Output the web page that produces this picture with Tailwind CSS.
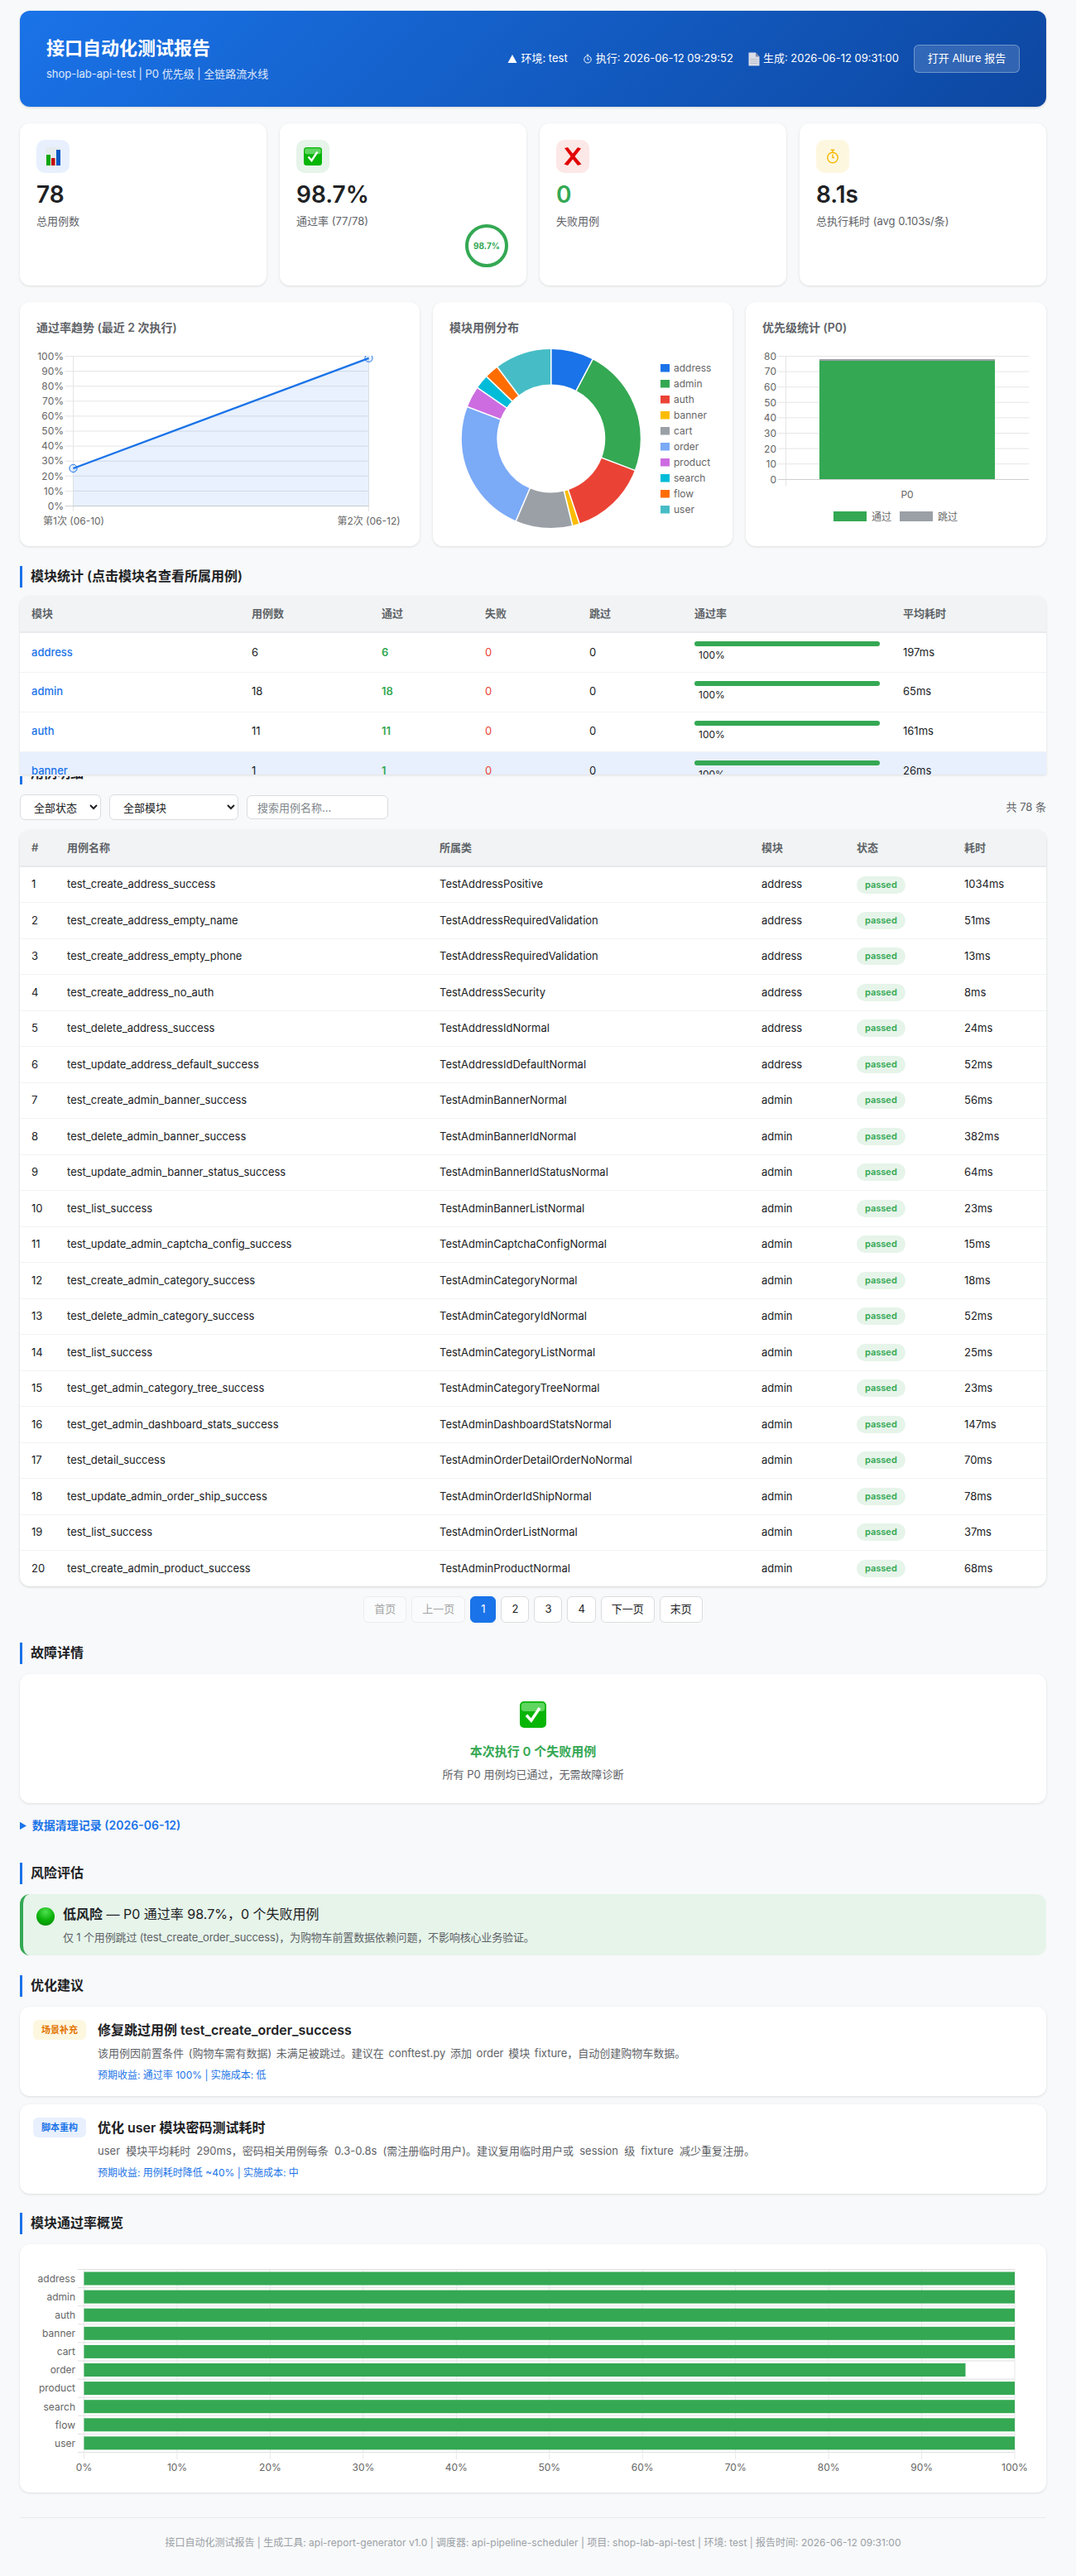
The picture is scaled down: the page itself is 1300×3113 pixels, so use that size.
<!DOCTYPE html>
<html lang="zh-CN">
<head>
<meta charset="utf-8">
<title>接口自动化测试报告</title>
<script src="https://cdn.jsdelivr.net/npm/@tailwindcss/browser@4"></script>
</head>
<body class="bg-[#f8f9fa] text-[#202124] font-[Inter,'Noto_Sans_CJK_SC',sans-serif] text-[13px]">
<div class="pl-6 pr-9 pt-[13px] pb-[29px]">

<!-- header -->
<header class="h-[116px] rounded-xl bg-[linear-gradient(135deg,#1a73e8,#0d47a1)] px-8 flex items-center justify-between text-white shadow-[0_1px_3px_rgba(60,64,67,0.2)]">
  <div>
    <h1 class="text-[22px] leading-[30px] font-bold mt-[-1px]">接口自动化测试报告</h1>
    <p class="text-[13px] leading-[20px] mt-[6px] text-white/85">shop-lab-api-test | P0 优先级 | 全链路流水线</p>
  </div>
  <div class="flex items-center gap-[18px] text-[13px]">
    <span class="flex items-center gap-[4px]"><svg width="12" height="12" viewBox="0 0 12 12"><path d="M6 1 L11.5 11 H0.5 Z" fill="#fff"/></svg>环境: test</span>
    <span class="flex items-center gap-[4px]"><svg width="12" height="12" viewBox="0 0 12 12" fill="none" stroke="#fff" stroke-width="1"><circle cx="6" cy="6.8" r="4.2"/><path d="M6 4.4V7L7.6 7M4.8 1.2H7.2"/></svg>执行: 2026-06-12 09:29:52</span>
    <span class="flex items-center gap-[4px]"><svg width="14" height="17" viewBox="0 0 14 17"><path d="M0.5 0.5H9L13.5 5.5V16.5H0.5Z" fill="#d9dce6"/><path d="M9 0.5V5.5H13.5Z" fill="#7f8aa8"/><path d="M2.5 8.5H11.5M2.5 11H11.5M2.5 13.5H11.5" stroke="#b8bdcc" stroke-width="1"/></svg>生成: 2026-06-12 09:31:00</span>
    <a class="ml-0 h-[34px] w-[128px] justify-center flex items-center rounded-md border border-white/30 bg-white/15 text-white">打开 Allure 报告</a>
  </div>
</header>

<!-- stat cards -->
<section class="mt-5 grid grid-cols-4 gap-4">
  <div class="bg-white rounded-xl p-5 shadow-[0_1px_3px_rgba(60,64,67,0.15)] flex flex-col">
    <div class="w-10 h-10 rounded-[10px] bg-[#e8f0fe] flex items-center justify-center">
      <svg width="18" height="22" viewBox="0 0 18 22"><path d="M0 0H18V22H0Z" fill="#e6ebee"/><path d="M1 9H6V22H1Z" fill="#0aa80a"/><path d="M7 13H11.5V22H7Z" fill="#c40c0c"/><path d="M13 3H18V22H13Z" fill="#0a58c4"/></svg>
    </div>
    <div class="mt-[9px] text-[28px] leading-[34px] font-semibold">78</div>
    <div class="mt-[5px] leading-[20px] text-[#5f6368]">总用例数</div>
  </div>
  <div class="bg-white rounded-xl p-5 shadow-[0_1px_3px_rgba(60,64,67,0.15)] flex flex-col">
    <div class="w-10 h-10 rounded-[10px] bg-[#e6f4ea] flex items-center justify-center">
      <svg width="22" height="22" viewBox="0 0 22 22"><rect width="22" height="22" rx="3.5" fill="#07b507"/><rect x="1.2" y="1.2" width="19.6" height="7" rx="2.5" fill="#5fd65f"/><path d="M5.5 11.5 L9.5 16 L16.5 5.5" fill="none" stroke="#fff" stroke-width="2.4"/></svg>
    </div>
    <div class="mt-[9px] text-[28px] leading-[34px] font-semibold">98.7%</div>
    <div class="mt-[5px] leading-[20px] text-[#5f6368]">通过率 (77/78)</div>
    <svg class="-mt-[8px] self-end" width="56" height="56" viewBox="0 0 56 56"><circle cx="28" cy="28" r="24" fill="none" stroke="#34a853" stroke-width="4"/><text x="28" y="31.5" text-anchor="middle" font-size="10" font-weight="700" fill="#34a853">98.7%</text></svg>
  </div>
  <div class="bg-white rounded-xl p-5 shadow-[0_1px_3px_rgba(60,64,67,0.15)] flex flex-col">
    <div class="w-10 h-10 rounded-[10px] bg-[#fce8e6] flex items-center justify-center">
      <svg width="24" height="22" viewBox="0 0 24 22"><path d="M2 1 L6 0 L12 7.5 L18 0 L22 1.5 L14.5 11 L22.5 20.5 L18 22 L12 14.5 L6 22 L1.5 20.5 L9.5 11 Z" fill="#e20606"/></svg>
    </div>
    <div class="mt-[9px] text-[28px] leading-[34px] font-semibold text-[#34a853]">0</div>
    <div class="mt-[5px] leading-[20px] text-[#5f6368]">失败用例</div>
  </div>
  <div class="bg-white rounded-xl p-5 shadow-[0_1px_3px_rgba(60,64,67,0.15)] flex flex-col">
    <div class="w-10 h-10 rounded-[10px] bg-[#fef7e0] flex items-center justify-center">
      <svg width="16" height="18" viewBox="0 0 16 18" fill="none" stroke="#f5b800" stroke-width="1.4"><circle cx="8" cy="10.5" r="6.2"/><path d="M8 6.5V10.5L10 10.5M5.8 1.2H10.2M8 1.2V4"/></svg>
    </div>
    <div class="mt-[9px] text-[28px] leading-[34px] font-semibold">8.1s</div>
    <div class="mt-[5px] leading-[20px] text-[#5f6368]">总执行耗时 (avg 0.103s/条)</div>
  </div>
</section>

<!-- charts -->
<section class="mt-5 grid grid-cols-[4fr_3fr_3fr] gap-4 h-[295px]">
  <div class="bg-white rounded-xl p-5 shadow-[0_1px_3px_rgba(60,64,67,0.15)]">
    <h3 class="text-[14px] leading-[21px] font-semibold text-[#5f6368] mb-[13px]">通过率趋势 (最近 2 次执行)</h3>
    <svg class="block overflow-visible" width="443" height="221" viewBox="0 0 443 221">
      <defs><clipPath id="lineclip"><rect x="70" y="430" width="390" height="200"/></clipPath></defs>
      <g transform="translate(-44,-419)" font-size="12" fill="#666">
        <path d="M78.5 430.5H445.5M78.5 448.6H445.5M78.5 466.7H445.5M78.5 484.8H445.5M78.5 502.9H445.5M78.5 521H445.5M78.5 539.1H445.5M78.5 557.2H445.5M78.5 575.3H445.5M78.5 593.4H445.5M88.5 430.5V618M445.5 430.5V618" stroke="#e5e5e5" fill="none"/>
        <path d="M78.5 611.5H445.5" stroke="#cfcfcf" fill="none"/>
        <path d="M88.5 566 L445.5 432.8 V611.5 H88.5 Z" fill="#1a73e8" fill-opacity="0.1"/>
        <g clip-path="url(#lineclip)">
          <circle cx="88.5" cy="566" r="4.6" fill="#1a73e8" fill-opacity="0.1" stroke="#1a73e8" stroke-width="1"/>
          <circle cx="445.5" cy="432.8" r="4.6" fill="#1a73e8" fill-opacity="0.1" stroke="#1a73e8" stroke-width="1"/>
          <path d="M88.5 566 L445.5 432.8" stroke="#1a73e8" stroke-width="2.4" fill="none"/>
        </g>
        <g text-anchor="end">
          <text x="77" y="435">100%</text><text x="77" y="453">90%</text><text x="77" y="471">80%</text><text x="77" y="489">70%</text><text x="77" y="507">60%</text><text x="77" y="525">50%</text><text x="77" y="543">40%</text><text x="77" y="561">30%</text><text x="77" y="580">20%</text><text x="77" y="598">10%</text><text x="77" y="616">0%</text>
        </g>
        <g text-anchor="middle">
          <text x="89" y="634">第1次 (06-10)</text><text x="445.5" y="634">第2次 (06-12)</text>
        </g>
      </g>
    </svg>
  </div>
  <div class="bg-white rounded-xl p-5 shadow-[0_1px_3px_rgba(60,64,67,0.15)]">
    <h3 class="text-[14px] leading-[21px] font-semibold text-[#5f6368] mb-[13px]">模块用例分布</h3>
    <svg class="block overflow-visible" width="322" height="221" viewBox="0 0 322 221">
      <g transform="translate(-543,-419)" font-size="12" fill="#666">
        <g transform="translate(665.8,530) rotate(-90)" fill="none" stroke-width="42.5">
          <circle r="86.75" pathLength="78" stroke="#1a73e8" stroke-dasharray="6 72" stroke-dashoffset="0"/>
          <circle r="86.75" pathLength="78" stroke="#34a853" stroke-dasharray="18 60" stroke-dashoffset="-6"/>
          <circle r="86.75" pathLength="78" stroke="#ea4335" stroke-dasharray="11 67" stroke-dashoffset="-24"/>
          <circle r="86.75" pathLength="78" stroke="#fbbc04" stroke-dasharray="1 77" stroke-dashoffset="-35"/>
          <circle r="86.75" pathLength="78" stroke="#9aa0a6" stroke-dasharray="8 70" stroke-dashoffset="-36"/>
          <circle r="86.75" pathLength="78" stroke="#7baaf7" stroke-dasharray="19 59" stroke-dashoffset="-44"/>
          <circle r="86.75" pathLength="78" stroke="#cc6ce0" stroke-dasharray="3 75" stroke-dashoffset="-63"/>
          <circle r="86.75" pathLength="78" stroke="#00bcd8" stroke-dasharray="2 76" stroke-dashoffset="-66"/>
          <circle r="86.75" pathLength="78" stroke="#ff6d00" stroke-dasharray="2 76" stroke-dashoffset="-68"/>
          <circle r="86.75" pathLength="78" stroke="#46bdc6" stroke-dasharray="8 70" stroke-dashoffset="-70"/>
        </g>
        <g transform="translate(665.8,530)" stroke="#fff" stroke-width="1.6">
          <line x1="0" y1="-60" x2="0" y2="-112"/>
          <line x1="0" y1="-60" x2="0" y2="-112" transform="rotate(27.69)"/>
          <line x1="0" y1="-60" x2="0" y2="-112" transform="rotate(110.77)"/>
          <line x1="0" y1="-60" x2="0" y2="-112" transform="rotate(161.54)"/>
          <line x1="0" y1="-60" x2="0" y2="-112" transform="rotate(166.15)"/>
          <line x1="0" y1="-60" x2="0" y2="-112" transform="rotate(203.08)"/>
          <line x1="0" y1="-60" x2="0" y2="-112" transform="rotate(290.77)"/>
          <line x1="0" y1="-60" x2="0" y2="-112" transform="rotate(304.62)"/>
          <line x1="0" y1="-60" x2="0" y2="-112" transform="rotate(313.85)"/>
          <line x1="0" y1="-60" x2="0" y2="-112" transform="rotate(323.08)"/>
        </g>
        <rect x="798" y="440" width="11" height="9.5" fill="#1a73e8"/><text x="814" y="448.5">address</text>
        <rect x="798" y="459" width="11" height="9.5" fill="#34a853"/><text x="814" y="467.5">admin</text>
        <rect x="798" y="478" width="11" height="9.5" fill="#ea4335"/><text x="814" y="486.5">auth</text>
        <rect x="798" y="497" width="11" height="9.5" fill="#fbbc04"/><text x="814" y="505.5">banner</text>
        <rect x="798" y="516" width="11" height="9.5" fill="#9aa0a6"/><text x="814" y="524.5">cart</text>
        <rect x="798" y="535" width="11" height="9.5" fill="#7baaf7"/><text x="814" y="543.5">order</text>
        <rect x="798" y="554" width="11" height="9.5" fill="#cc6ce0"/><text x="814" y="562.5">product</text>
        <rect x="798" y="573" width="11" height="9.5" fill="#00bcd8"/><text x="814" y="581.5">search</text>
        <rect x="798" y="592" width="11" height="9.5" fill="#ff6d00"/><text x="814" y="600.5">flow</text>
        <rect x="798" y="611" width="11" height="9.5" fill="#46bdc6"/><text x="814" y="619.5">user</text>
      </g>
    </svg>
  </div>
  <div class="bg-white rounded-xl p-5 shadow-[0_1px_3px_rgba(60,64,67,0.15)]">
    <h3 class="text-[14px] leading-[21px] font-semibold text-[#5f6368] mb-[13px]">优先级统计 (P0)</h3>
    <svg class="block overflow-visible" width="323" height="221" viewBox="0 0 323 221">
      <g transform="translate(-921,-419)" font-size="12" fill="#666">
        <path d="M940 430.5H1243M940 449.1H1243M940 467.7H1243M940 486.3H1243M940 504.9H1243M940 523.5H1243M940 542.1H1243M940 560.7H1243M949.5 430.5V587" stroke="#e5e5e5" fill="none"/>
        <path d="M940 579.5H1243" stroke="#cfcfcf" fill="none"/>
        <rect x="990" y="434" width="212" height="2" fill="#9aa0a6"/>
        <rect x="990" y="436" width="212" height="143" fill="#34a853"/>
        <g text-anchor="end">
          <text x="938" y="434.5">80</text><text x="938" y="453">70</text><text x="938" y="472">60</text><text x="938" y="491">50</text><text x="938" y="509">40</text><text x="938" y="528">30</text><text x="938" y="547">20</text><text x="938" y="565">10</text><text x="938" y="584">0</text>
        </g>
        <text x="1096" y="602" text-anchor="middle">P0</text>
        <rect x="1007" y="618" width="40" height="12" fill="#34a853"/><text x="1053" y="628.5">通过</text>
        <rect x="1087" y="618" width="40" height="12" fill="#9aa0a6"/><text x="1133" y="628.5">跳过</text>
      </g>
    </svg>
  </div>
</section>

<!-- module table -->
<h2 class="mt-6 mb-[10px] h-[26px] border-l-[3px] border-[#1a73e8] pl-[10px] text-[16px] leading-[24px] font-semibold">模块统计 (点击模块名查看所属用例)</h2>
<div class="relative z-10 h-[218px] bg-[#f8f9fa]">
  <div class="h-[216px] overflow-hidden rounded-t-xl bg-white shadow-[0_1px_3px_rgba(60,64,67,0.15)]">
    <table class="w-full table-fixed border-collapse text-left text-[13px]">
      <thead>
        <tr class="h-[44px] bg-[#f1f3f4] border-b-2 border-[#e8eaed] text-[#5f6368]">
          <th class="w-[266px] pl-[14px] font-semibold">模块</th>
          <th class="w-[157px] pl-[14px] font-semibold">用例数</th>
          <th class="w-[125px] pl-[14px] font-semibold">通过</th>
          <th class="w-[126px] pl-[14px] font-semibold">失败</th>
          <th class="w-[127px] pl-[14px] font-semibold">跳过</th>
          <th class="w-[252px] pl-[14px] font-semibold">通过率</th>
          <th class="pl-[14px] font-semibold">平均耗时</th>
        </tr>
      </thead>
      <tbody>
        <tr class="h-[48px] border-b border-[#f1f3f4]">
          <td class="pl-[14px] text-[#1a73e8] font-medium">address</td><td class="pl-[14px]">6</td><td class="pl-[14px] text-[#34a853] font-semibold">6</td><td class="pl-[14px] text-[#ea4335]">0</td><td class="pl-[14px]">0</td>
          <td class="pl-[14px] pr-[14px]"><div class="h-[6px] rounded-full bg-[#34a853]"></div><div class="pl-[5px] text-[12px] leading-[21px]">100%</div></td><td class="pl-[14px]">197ms</td>
        </tr>
        <tr class="h-[48px] border-b border-[#f1f3f4]">
          <td class="pl-[14px] text-[#1a73e8] font-medium">admin</td><td class="pl-[14px]">18</td><td class="pl-[14px] text-[#34a853] font-semibold">18</td><td class="pl-[14px] text-[#ea4335]">0</td><td class="pl-[14px]">0</td>
          <td class="pl-[14px] pr-[14px]"><div class="h-[6px] rounded-full bg-[#34a853]"></div><div class="pl-[5px] text-[12px] leading-[21px]">100%</div></td><td class="pl-[14px]">65ms</td>
        </tr>
        <tr class="h-[48px] border-b border-[#f1f3f4]">
          <td class="pl-[14px] text-[#1a73e8] font-medium">auth</td><td class="pl-[14px]">11</td><td class="pl-[14px] text-[#34a853] font-semibold">11</td><td class="pl-[14px] text-[#ea4335]">0</td><td class="pl-[14px]">0</td>
          <td class="pl-[14px] pr-[14px]"><div class="h-[6px] rounded-full bg-[#34a853]"></div><div class="pl-[5px] text-[12px] leading-[21px]">100%</div></td><td class="pl-[14px]">161ms</td>
        </tr>
        <tr class="h-[48px] border-b border-[#f1f3f4] bg-[#e8f0fe]">
          <td class="pl-[14px] text-[#1a73e8] font-medium">banner</td><td class="pl-[14px]">1</td><td class="pl-[14px] text-[#34a853] font-semibold">1</td><td class="pl-[14px] text-[#ea4335]">0</td><td class="pl-[14px]">0</td>
          <td class="pl-[14px] pr-[14px]"><div class="h-[6px] rounded-full bg-[#34a853]"></div><div class="pl-[5px] text-[12px] leading-[21px]">100%</div></td><td class="pl-[14px]">26ms</td>
        </tr>
      </tbody>
    </table>
  </div>
</div>

<!-- case list -->
<h2 class="-mt-[16px] mb-3 h-[26px] border-l-[3px] border-[#1a73e8] pl-[10px] text-[16px] leading-[24px] font-semibold">用例明细</h2>
<div class="flex items-center gap-[10px] h-[31px]">
  <select class="w-[98px] h-[31px] px-3 rounded-md border border-[#dadce0] bg-white text-[13px]"><option>全部状态</option></select>
  <select class="w-[156px] h-[31px] px-3 rounded-md border border-[#dadce0] bg-white text-[13px]"><option>全部模块</option></select>
  <input class="w-[171px] h-[29px] px-3 rounded-md border border-[#dadce0] bg-white text-[13px] placeholder:text-[#80868b]" placeholder="搜索用例名称...">
  <span class="ml-auto text-[#5f6368]">共 78 条</span>
</div>
<div class="mt-3 overflow-hidden rounded-xl bg-white shadow-[0_1px_3px_rgba(60,64,67,0.2)]">
  <table class="w-full table-fixed border-collapse text-left text-[13px]">
    <thead>
      <tr class="h-[44px] bg-[#f1f3f4] border-b-2 border-[#e8eaed] text-[#5f6368]">
        <th class="w-[43px] pl-[14px] font-semibold">#</th>
        <th class="w-[450px] pl-[14px] font-semibold">用例名称</th>
        <th class="w-[389px] pl-[14px] font-semibold">所属类</th>
        <th class="w-[115px] pl-[14px] font-semibold">模块</th>
        <th class="w-[130px] pl-[14px] font-semibold">状态</th>
        <th class="pl-[14px] font-semibold">耗时</th>
      </tr>
    </thead>
    <tbody>
      <tr class="h-[43.5px] border-b border-[#f1f3f4]"><td class="pl-[14px]">1</td><td class="pl-[14px]">test_create_address_success</td><td class="pl-[14px]">TestAddressPositive</td><td class="pl-[14px]">address</td><td class="pl-[14px]"><span class="inline-block h-[21px] leading-[21px] px-[10px] rounded-full bg-[#e6f4ea] text-[#34a853] text-[11px] font-semibold">passed</span></td><td class="pl-[14px]">1034ms</td></tr>
      <tr class="h-[43.5px] border-b border-[#f1f3f4]"><td class="pl-[14px]">2</td><td class="pl-[14px]">test_create_address_empty_name</td><td class="pl-[14px]">TestAddressRequiredValidation</td><td class="pl-[14px]">address</td><td class="pl-[14px]"><span class="inline-block h-[21px] leading-[21px] px-[10px] rounded-full bg-[#e6f4ea] text-[#34a853] text-[11px] font-semibold">passed</span></td><td class="pl-[14px]">51ms</td></tr>
      <tr class="h-[43.5px] border-b border-[#f1f3f4]"><td class="pl-[14px]">3</td><td class="pl-[14px]">test_create_address_empty_phone</td><td class="pl-[14px]">TestAddressRequiredValidation</td><td class="pl-[14px]">address</td><td class="pl-[14px]"><span class="inline-block h-[21px] leading-[21px] px-[10px] rounded-full bg-[#e6f4ea] text-[#34a853] text-[11px] font-semibold">passed</span></td><td class="pl-[14px]">13ms</td></tr>
      <tr class="h-[43.5px] border-b border-[#f1f3f4]"><td class="pl-[14px]">4</td><td class="pl-[14px]">test_create_address_no_auth</td><td class="pl-[14px]">TestAddressSecurity</td><td class="pl-[14px]">address</td><td class="pl-[14px]"><span class="inline-block h-[21px] leading-[21px] px-[10px] rounded-full bg-[#e6f4ea] text-[#34a853] text-[11px] font-semibold">passed</span></td><td class="pl-[14px]">8ms</td></tr>
      <tr class="h-[43.5px] border-b border-[#f1f3f4]"><td class="pl-[14px]">5</td><td class="pl-[14px]">test_delete_address_success</td><td class="pl-[14px]">TestAddressIdNormal</td><td class="pl-[14px]">address</td><td class="pl-[14px]"><span class="inline-block h-[21px] leading-[21px] px-[10px] rounded-full bg-[#e6f4ea] text-[#34a853] text-[11px] font-semibold">passed</span></td><td class="pl-[14px]">24ms</td></tr>
      <tr class="h-[43.5px] border-b border-[#f1f3f4]"><td class="pl-[14px]">6</td><td class="pl-[14px]">test_update_address_default_success</td><td class="pl-[14px]">TestAddressIdDefaultNormal</td><td class="pl-[14px]">address</td><td class="pl-[14px]"><span class="inline-block h-[21px] leading-[21px] px-[10px] rounded-full bg-[#e6f4ea] text-[#34a853] text-[11px] font-semibold">passed</span></td><td class="pl-[14px]">52ms</td></tr>
      <tr class="h-[43.5px] border-b border-[#f1f3f4]"><td class="pl-[14px]">7</td><td class="pl-[14px]">test_create_admin_banner_success</td><td class="pl-[14px]">TestAdminBannerNormal</td><td class="pl-[14px]">admin</td><td class="pl-[14px]"><span class="inline-block h-[21px] leading-[21px] px-[10px] rounded-full bg-[#e6f4ea] text-[#34a853] text-[11px] font-semibold">passed</span></td><td class="pl-[14px]">56ms</td></tr>
      <tr class="h-[43.5px] border-b border-[#f1f3f4]"><td class="pl-[14px]">8</td><td class="pl-[14px]">test_delete_admin_banner_success</td><td class="pl-[14px]">TestAdminBannerIdNormal</td><td class="pl-[14px]">admin</td><td class="pl-[14px]"><span class="inline-block h-[21px] leading-[21px] px-[10px] rounded-full bg-[#e6f4ea] text-[#34a853] text-[11px] font-semibold">passed</span></td><td class="pl-[14px]">382ms</td></tr>
      <tr class="h-[43.5px] border-b border-[#f1f3f4]"><td class="pl-[14px]">9</td><td class="pl-[14px]">test_update_admin_banner_status_success</td><td class="pl-[14px]">TestAdminBannerIdStatusNormal</td><td class="pl-[14px]">admin</td><td class="pl-[14px]"><span class="inline-block h-[21px] leading-[21px] px-[10px] rounded-full bg-[#e6f4ea] text-[#34a853] text-[11px] font-semibold">passed</span></td><td class="pl-[14px]">64ms</td></tr>
      <tr class="h-[43.5px] border-b border-[#f1f3f4]"><td class="pl-[14px]">10</td><td class="pl-[14px]">test_list_success</td><td class="pl-[14px]">TestAdminBannerListNormal</td><td class="pl-[14px]">admin</td><td class="pl-[14px]"><span class="inline-block h-[21px] leading-[21px] px-[10px] rounded-full bg-[#e6f4ea] text-[#34a853] text-[11px] font-semibold">passed</span></td><td class="pl-[14px]">23ms</td></tr>
      <tr class="h-[43.5px] border-b border-[#f1f3f4]"><td class="pl-[14px]">11</td><td class="pl-[14px]">test_update_admin_captcha_config_success</td><td class="pl-[14px]">TestAdminCaptchaConfigNormal</td><td class="pl-[14px]">admin</td><td class="pl-[14px]"><span class="inline-block h-[21px] leading-[21px] px-[10px] rounded-full bg-[#e6f4ea] text-[#34a853] text-[11px] font-semibold">passed</span></td><td class="pl-[14px]">15ms</td></tr>
      <tr class="h-[43.5px] border-b border-[#f1f3f4]"><td class="pl-[14px]">12</td><td class="pl-[14px]">test_create_admin_category_success</td><td class="pl-[14px]">TestAdminCategoryNormal</td><td class="pl-[14px]">admin</td><td class="pl-[14px]"><span class="inline-block h-[21px] leading-[21px] px-[10px] rounded-full bg-[#e6f4ea] text-[#34a853] text-[11px] font-semibold">passed</span></td><td class="pl-[14px]">18ms</td></tr>
      <tr class="h-[43.5px] border-b border-[#f1f3f4]"><td class="pl-[14px]">13</td><td class="pl-[14px]">test_delete_admin_category_success</td><td class="pl-[14px]">TestAdminCategoryIdNormal</td><td class="pl-[14px]">admin</td><td class="pl-[14px]"><span class="inline-block h-[21px] leading-[21px] px-[10px] rounded-full bg-[#e6f4ea] text-[#34a853] text-[11px] font-semibold">passed</span></td><td class="pl-[14px]">52ms</td></tr>
      <tr class="h-[43.5px] border-b border-[#f1f3f4]"><td class="pl-[14px]">14</td><td class="pl-[14px]">test_list_success</td><td class="pl-[14px]">TestAdminCategoryListNormal</td><td class="pl-[14px]">admin</td><td class="pl-[14px]"><span class="inline-block h-[21px] leading-[21px] px-[10px] rounded-full bg-[#e6f4ea] text-[#34a853] text-[11px] font-semibold">passed</span></td><td class="pl-[14px]">25ms</td></tr>
      <tr class="h-[43.5px] border-b border-[#f1f3f4]"><td class="pl-[14px]">15</td><td class="pl-[14px]">test_get_admin_category_tree_success</td><td class="pl-[14px]">TestAdminCategoryTreeNormal</td><td class="pl-[14px]">admin</td><td class="pl-[14px]"><span class="inline-block h-[21px] leading-[21px] px-[10px] rounded-full bg-[#e6f4ea] text-[#34a853] text-[11px] font-semibold">passed</span></td><td class="pl-[14px]">23ms</td></tr>
      <tr class="h-[43.5px] border-b border-[#f1f3f4]"><td class="pl-[14px]">16</td><td class="pl-[14px]">test_get_admin_dashboard_stats_success</td><td class="pl-[14px]">TestAdminDashboardStatsNormal</td><td class="pl-[14px]">admin</td><td class="pl-[14px]"><span class="inline-block h-[21px] leading-[21px] px-[10px] rounded-full bg-[#e6f4ea] text-[#34a853] text-[11px] font-semibold">passed</span></td><td class="pl-[14px]">147ms</td></tr>
      <tr class="h-[43.5px] border-b border-[#f1f3f4]"><td class="pl-[14px]">17</td><td class="pl-[14px]">test_detail_success</td><td class="pl-[14px]">TestAdminOrderDetailOrderNoNormal</td><td class="pl-[14px]">admin</td><td class="pl-[14px]"><span class="inline-block h-[21px] leading-[21px] px-[10px] rounded-full bg-[#e6f4ea] text-[#34a853] text-[11px] font-semibold">passed</span></td><td class="pl-[14px]">70ms</td></tr>
      <tr class="h-[43.5px] border-b border-[#f1f3f4]"><td class="pl-[14px]">18</td><td class="pl-[14px]">test_update_admin_order_ship_success</td><td class="pl-[14px]">TestAdminOrderIdShipNormal</td><td class="pl-[14px]">admin</td><td class="pl-[14px]"><span class="inline-block h-[21px] leading-[21px] px-[10px] rounded-full bg-[#e6f4ea] text-[#34a853] text-[11px] font-semibold">passed</span></td><td class="pl-[14px]">78ms</td></tr>
      <tr class="h-[43.5px] border-b border-[#f1f3f4]"><td class="pl-[14px]">19</td><td class="pl-[14px]">test_list_success</td><td class="pl-[14px]">TestAdminOrderListNormal</td><td class="pl-[14px]">admin</td><td class="pl-[14px]"><span class="inline-block h-[21px] leading-[21px] px-[10px] rounded-full bg-[#e6f4ea] text-[#34a853] text-[11px] font-semibold">passed</span></td><td class="pl-[14px]">37ms</td></tr>
      <tr class="h-[43.5px]"><td class="pl-[14px]">20</td><td class="pl-[14px]">test_create_admin_product_success</td><td class="pl-[14px]">TestAdminProductNormal</td><td class="pl-[14px]">admin</td><td class="pl-[14px]"><span class="inline-block h-[21px] leading-[21px] px-[10px] rounded-full bg-[#e6f4ea] text-[#34a853] text-[11px] font-semibold">passed</span></td><td class="pl-[14px]">68ms</td></tr>
    </tbody>
  </table>
</div>
<nav class="mt-3 flex justify-center gap-[6px] text-[13px]">
  <button class="h-[32px] px-3 rounded-md border border-[#dadce0] bg-white opacity-40">首页</button>
  <button class="h-[32px] px-3 rounded-md border border-[#dadce0] bg-white opacity-40">上一页</button>
  <button class="h-[32px] px-3 rounded-md bg-[#1a73e8] border border-[#1a73e8] text-white">1</button>
  <button class="h-[32px] px-3 rounded-md border border-[#dadce0] bg-white">2</button>
  <button class="h-[32px] px-3 rounded-md border border-[#dadce0] bg-white">3</button>
  <button class="h-[32px] px-3 rounded-md border border-[#dadce0] bg-white">4</button>
  <button class="h-[32px] px-3 rounded-md border border-[#dadce0] bg-white">下一页</button>
  <button class="h-[32px] px-3 rounded-md border border-[#dadce0] bg-white">末页</button>
</nav>

<!-- failures -->
<h2 class="mt-6 mb-3 h-[26px] border-l-[3px] border-[#1a73e8] pl-[10px] text-[16px] leading-[24px] font-semibold">故障详情</h2>
<div class="h-[156px] rounded-xl bg-white shadow-[0_1px_3px_rgba(60,64,67,0.15)] flex flex-col items-center pt-[33px]">
  <svg width="32" height="32" viewBox="0 0 22 22"><rect width="22" height="22" rx="3.5" fill="#07b507"/><rect x="1.2" y="1.2" width="19.6" height="7" rx="2.5" fill="#5fd65f"/><path d="M5.5 11.5 L9.5 16 L16.5 5.5" fill="none" stroke="#fff" stroke-width="2.4"/></svg>
  <div class="mt-[18px] text-[15px] leading-[22px] font-semibold text-[#34a853]">本次执行 0 个失败用例</div>
  <div class="mt-[6px] text-[13px] leading-[20px] text-[#5f6368]">所有 P0 用例均已通过，无需故障诊断</div>
</div>
<details class="mt-[17px]"><summary class="text-[14px] leading-[20px] font-semibold text-[#1a73e8]">数据清理记录 (2026-06-12)</summary></details>

<!-- risk -->
<h2 class="mt-[35px] mb-3 h-[26px] border-l-[3px] border-[#1a73e8] pl-[10px] text-[16px] leading-[24px] font-semibold">风险评估</h2>
<div class="h-[74px] rounded-xl border-l-4 border-[#34a853] bg-[#e6f4ea] pl-4 pt-3">
  <div class="flex gap-[10px] h-[24px]">
    <svg class="mt-[4px]" width="22" height="22" viewBox="0 0 22 22"><defs><radialGradient id="ball" cx="50%" cy="25%" r="80%"><stop offset="0" stop-color="#4ee04e"/><stop offset="0.6" stop-color="#08b008"/><stop offset="1" stop-color="#058a05"/></radialGradient></defs><circle cx="11" cy="11" r="11" fill="url(#ball)"/></svg>
    <div class="text-[16px] leading-[24px]"><span class="font-semibold">低风险</span> — P0 通过率 98.7%，0 个失败用例</div>
  </div>
  <div class="ml-[32px] mt-[6px] leading-[20px] text-[#5f6368] tracking-[-0.15px]">仅 1 个用例跳过 (test_create_order_success)，为购物车前置数据依赖问题，不影响核心业务验证。</div>
</div>

<!-- suggestions -->
<h2 class="mt-6 mb-3 h-[26px] border-l-[3px] border-[#1a73e8] pl-[10px] text-[16px] leading-[24px] font-semibold">优化建议</h2>
<div class="rounded-xl bg-white shadow-[0_1px_3px_rgba(60,64,67,0.15)] p-4 flex gap-[14px]">
  <span class="shrink-0 h-[24px] w-[64px] flex items-center justify-center rounded-md bg-[#fef7e0] text-[#e37400] text-[11px] font-semibold">场景补充</span>
  <div>
    <div class="text-[16px] leading-[24px] font-semibold">修复跳过用例 test_create_order_success</div>
    <div class="mt-[6px] leading-[20px] text-[#5f6368] [word-spacing:2px]">该用例因前置条件 (购物车需有数据) 未满足被跳过。建议在 conftest.py 添加 order 模块 fixture，自动创建购物车数据。</div>
    <div class="mt-[7px] text-[12px] leading-[19px] text-[#1a73e8]">预期收益: 通过率 100% | 实施成本: 低</div>
  </div>
</div>
<div class="mt-[10px] rounded-xl bg-white shadow-[0_1px_3px_rgba(60,64,67,0.15)] p-4 flex gap-[14px]">
  <span class="shrink-0 h-[24px] w-[64px] flex items-center justify-center rounded-md bg-[#e8f0fe] text-[#1a73e8] text-[11px] font-semibold">脚本重构</span>
  <div>
    <div class="text-[16px] leading-[24px] font-semibold">优化 user 模块密码测试耗时</div>
    <div class="mt-[6px] leading-[20px] text-[#5f6368] [word-spacing:3.5px]">user 模块平均耗时 290ms，密码相关用例每条 0.3-0.8s (需注册临时用户)。建议复用临时用户或 session 级 fixture 减少重复注册。</div>
    <div class="mt-[7px] text-[12px] leading-[19px] text-[#1a73e8]">预期收益: 用例耗时降低 ~40% | 实施成本: 中</div>
  </div>
</div>

<!-- overview -->
<h2 class="mt-[23px] mb-3 h-[26px] border-l-[3px] border-[#1a73e8] pl-[10px] text-[16px] leading-[24px] font-semibold">模块通过率概览</h2>
<div class="h-[300px] rounded-xl bg-white shadow-[0_1px_3px_rgba(60,64,67,0.15)] p-5">
  <svg class="block overflow-visible" width="1200" height="260" viewBox="0 0 1200 260">
    <g transform="translate(-44,-2732)" font-size="12" fill="#666">
      <path d="M94 2742.5H1226M94 2764.6H1226M94 2786.7H1226M94 2808.8H1226M94 2830.9H1226M94 2853H1226M94 2875.1H1226M94 2897.2H1226M94 2919.3H1226M94 2941.4H1226M94 2963.5H1226" stroke="#e0e0e0" fill="none"/>
      <path d="M101.5 2742.5V2972M213.95 2742.5V2972M326.4 2742.5V2972M438.85 2742.5V2972M551.3 2742.5V2972M663.75 2742.5V2972M776.2 2742.5V2972M888.65 2742.5V2972M1001.1 2742.5V2972M1113.55 2742.5V2972M1226 2742.5V2972" stroke="#e8e8e8" fill="none"/>
      <g fill="#34a853">
        <rect x="101.5" y="2745.5" width="1124.5" height="16"/><rect x="101.5" y="2767.6" width="1124.5" height="16"/><rect x="101.5" y="2789.7" width="1124.5" height="16"/><rect x="101.5" y="2811.8" width="1124.5" height="16"/><rect x="101.5" y="2833.9" width="1124.5" height="16"/>
        <rect x="101.5" y="2856" width="1065" height="16"/>
        <rect x="101.5" y="2878.1" width="1124.5" height="16"/><rect x="101.5" y="2900.2" width="1124.5" height="16"/><rect x="101.5" y="2922.3" width="1124.5" height="16"/><rect x="101.5" y="2944.4" width="1124.5" height="16"/>
      </g>
      <g text-anchor="end">
        <text x="91" y="2758">address</text><text x="91" y="2780">admin</text><text x="91" y="2802">auth</text><text x="91" y="2824">banner</text><text x="91" y="2846">cart</text><text x="91" y="2868">order</text><text x="91" y="2890">product</text><text x="91" y="2913">search</text><text x="91" y="2935">flow</text><text x="91" y="2957">user</text>
      </g>
      <g text-anchor="middle">
        <text x="101.5" y="2986">0%</text><text x="214" y="2986">10%</text><text x="326.4" y="2986">20%</text><text x="438.9" y="2986">30%</text><text x="551.3" y="2986">40%</text><text x="663.8" y="2986">50%</text><text x="776.2" y="2986">60%</text><text x="888.7" y="2986">70%</text><text x="1001.1" y="2986">80%</text><text x="1113.6" y="2986">90%</text><text x="1226" y="2986">100%</text>
      </g>
    </g>
  </svg>
</div>

<footer class="mt-[30px] border-t border-[#e8eaed] pt-5 text-center text-[12px] leading-[20px] text-[#9aa0a6]">接口自动化测试报告 | 生成工具: api-report-generator v1.0 | 调度器: api-pipeline-scheduler | 项目: shop-lab-api-test | 环境: test | 报告时间: 2026-06-12 09:31:00</footer>
</div>
</body>
</html>
